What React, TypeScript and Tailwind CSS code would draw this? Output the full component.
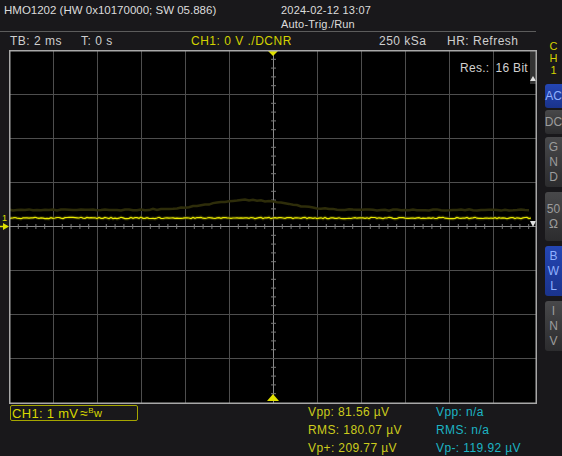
import React from 'react';

const font = { fontFamily: '"Liberation Sans", Arial, sans-serif' };

// pseudo random for trace noise
function rnd(seed: number) {
  const x = Math.sin(seed * 12.9898) * 43758.5453;
  return x - Math.floor(x);
}

const W = 528;
const H = 354;
const DIV = 44;

const Graticule: React.FC = () => {
  const vLines = Array.from({ length: 11 }, (_, i) => (i + 1) * DIV);
  const hLines = Array.from({ length: 7 }, (_, i) => (i + 1) * DIV);
  const ticksX = Array.from({ length: 60 }, (_, i) => i * 8.8).filter((x) => x > 0 && x < W && Math.round(x) % DIV !== 0);
  const ticksY = Array.from({ length: 40 }, (_, i) => i * 8.8).filter((y) => y > 0 && y < H && Math.round(y) % DIV !== 0);

  // yellow trace
  const pts: string[] = [];
  for (let x = 0; x <= W - 6; x += 2) {
    const y = 168 + (rnd(x + 1) - 0.5) * 1.4;
    pts.push(`${x},${y.toFixed(1)}`);
  }
  // faint hump
  const faint: string[] = [];
  for (let x = 0; x <= W - 6; x += 4) {
    const hump = 10 * Math.exp(-Math.pow((x - 240) / 55, 2));
    const y = 160 - hump + (rnd(x + 7) - 0.5) * 1.2;
    faint.push(`${x},${y.toFixed(1)}`);
  }

  return (
    <svg width={W} height={H} className="block">
      <rect x={0} y={0} width={W} height={H} fill="#000" />
      {vLines.map((x) => (
        <line key={'v' + x} x1={x + 0.5} y1={0} x2={x + 0.5} y2={H} stroke={x === 264 ? '#8a8a8a' : '#4e4e4e'} strokeWidth={1} />
      ))}
      {hLines.map((y) => (
        <line key={'h' + y} x1={0} y1={y + 0.5} x2={W} y2={y + 0.5} stroke={y === 176 ? '#8a8a8a' : '#4e4e4e'} strokeWidth={1} />
      ))}
      {ticksX.map((x) => (
        <line key={'tx' + x} x1={x + 0.5} y1={174} x2={x + 0.5} y2={179} stroke="#7a7a7a" strokeWidth={1} />
      ))}
      {ticksY.map((y) => (
        <line key={'ty' + y} x1={262} y1={y + 0.5} x2={267} y2={y + 0.5} stroke="#7a7a7a" strokeWidth={1} />
      ))}
      <polyline points={faint.join(' ')} fill="none" stroke="#2e2d0a" strokeWidth={2.5} />
      <polyline points={pts.join(' ')} fill="none" stroke="#4a4a00" strokeWidth={3.5} opacity={0.6} />
      <polyline points={pts.join(' ')} fill="none" stroke="#eaea00" strokeWidth={1.2} />
      {/* right side strip markers */}
      <rect x={521} y={0} width={6} height={34} fill="#333" />
      <polygon points="521,31 527,31 524,26" fill="#e0e0e0" />
      <polygon points="521,171 527,171 524,177" fill="#e0e0e0" />
      {/* trigger markers */}
      <polygon points="259,1 269,1 264,6" fill="#e0e000" />
      <polygon points="258,351 270,351 264,344" fill="#e0e000" />
      <rect x={0.75} y={0.75} width={W - 1.5} height={H - 1.5} fill="none" stroke="#a8a8a8" strokeWidth={1.5} />
    </svg>
  );
};

const SideButton: React.FC<{ label: string[]; active?: boolean; h: number; mt: number }> = ({ label, active, h, mt }) => (
  <div
    className={
      'w-[17px] rounded-l-[3px] flex flex-col items-center justify-center text-[12px] leading-[15px] ' +
      (active
        ? 'bg-gradient-to-b from-[#2446b4] to-[#1a338c] text-[#8fb0ff]'
        : 'bg-gradient-to-b from-[#48484a] to-[#2c2c2e] text-[#9c9c9c]')
    }
    style={{ height: h, marginTop: mt }}
  >
    {label.map((l, i) => (
      <span key={i}>{l}</span>
    ))}
  </div>
);

export default function App() {
  return (
    <div className="w-[562px] h-[456px] bg-[#19181b] flex overflow-hidden" style={font}>
      <div className="w-[538px] flex flex-col shrink-0">
        <div className="h-[33px] border-b border-[#5c5c5c] flex text-[11.5px] text-[#dcdcdc] w-[536px]">
          <div className="w-[281px] pl-[4px] pt-[3px] leading-[14px]">HMO1202 (HW 0x10170000; SW 05.886)</div>
          <div className="pt-[3px] leading-[14px] text-[11px] tracking-[0.2px]">
            <div>2024-02-12 13:07</div>
            <div>Auto-Trig./Run</div>
          </div>
        </div>
        <div className="h-[20px] flex items-center text-[12px] text-[#cfcfcf] tracking-[0.5px]">
          <span className="ml-[10px] w-[71px]">TB: 2 ms</span>
          <span className="w-[110px]">T: 0 s</span>
          <span className="w-[188px] text-[#d2d200]">CH1: 0 V ./DCNR</span>
          <span className="w-[68px]">250 kSa</span>
          <span>HR: Refresh</span>
        </div>
        <div className="flex h-[354px]">
          <div className="w-[9px] relative">
            <span className="absolute left-[2px] top-[164px] text-[9px] leading-[9px] text-[#e0e000]">1</span>
            <svg width={9} height={8} className="absolute left-0 top-[173px]">
              <line x1={0} y1={3.5} x2={4} y2={3.5} stroke="#e0e000" strokeWidth={1.5} />
              <polygon points="3,0 9,3.5 3,7" fill="#e0e000" />
            </svg>
          </div>
          <div className="relative w-[528px] h-[354px]">
            <Graticule />
            <div className="absolute top-[9px] right-[9px] flex text-[12px] text-[#d0d0d0] gap-[6px] tracking-[0.3px]">
              <span>Res.:</span>
              <span>16 Bit</span>
            </div>
          </div>
        </div>
        <div className="flex">
          <div className="ml-[10px] mt-[1px] w-[128px] h-[16px] border-[1.5px] border-[#a5a500] rounded-[2px] flex items-center px-[1px] text-[13px] text-[#d8d800] leading-none tracking-[0.3px]">
            <span>CH1: 1 mV</span>
            <span className="ml-[2px] text-[14px]">≈</span>
            <span className="text-[8px] -mt-[5px]">B</span>
            <span className="text-[11px]">w</span>
          </div>
          <div className="ml-[170px] mt-[-1px] flex flex-col text-[12px] leading-[18px] text-[#cccc1c] w-[128px] tracking-[0.4px]">
            <span>Vpp: 81.56 µV</span>
            <span>RMS: 180.07 µV</span>
            <span>Vp+: 209.77 µV</span>
          </div>
          <div className="mt-[-1px] flex flex-col text-[12px] leading-[18px] text-[#1cb4c4] tracking-[0.4px]">
            <span>Vpp: n/a</span>
            <span>RMS: n/a</span>
            <span>Vp-: 119.92 µV</span>
          </div>
        </div>
      </div>
      <div className="w-[24px] shrink-0 flex flex-col items-end">
        <div className="mt-[40px] w-[17px] flex flex-col items-center text-[11px] leading-[12px] text-[#d2d200]">
          <span>C</span>
          <span>H</span>
          <span>1</span>
        </div>
        <SideButton label={['AC']} active h={24} mt={8} />
        <SideButton label={['DC']} h={24} mt={2} />
        <SideButton label={['G', 'N', 'D']} h={50} mt={3} />
        <SideButton label={['50', 'Ω']} h={49} mt={5} />
        <SideButton label={['B', 'W', 'L']} active h={50} mt={5} />
        <SideButton label={['I', 'N', 'V']} h={50} mt={5} />
      </div>
    </div>
  );
}
